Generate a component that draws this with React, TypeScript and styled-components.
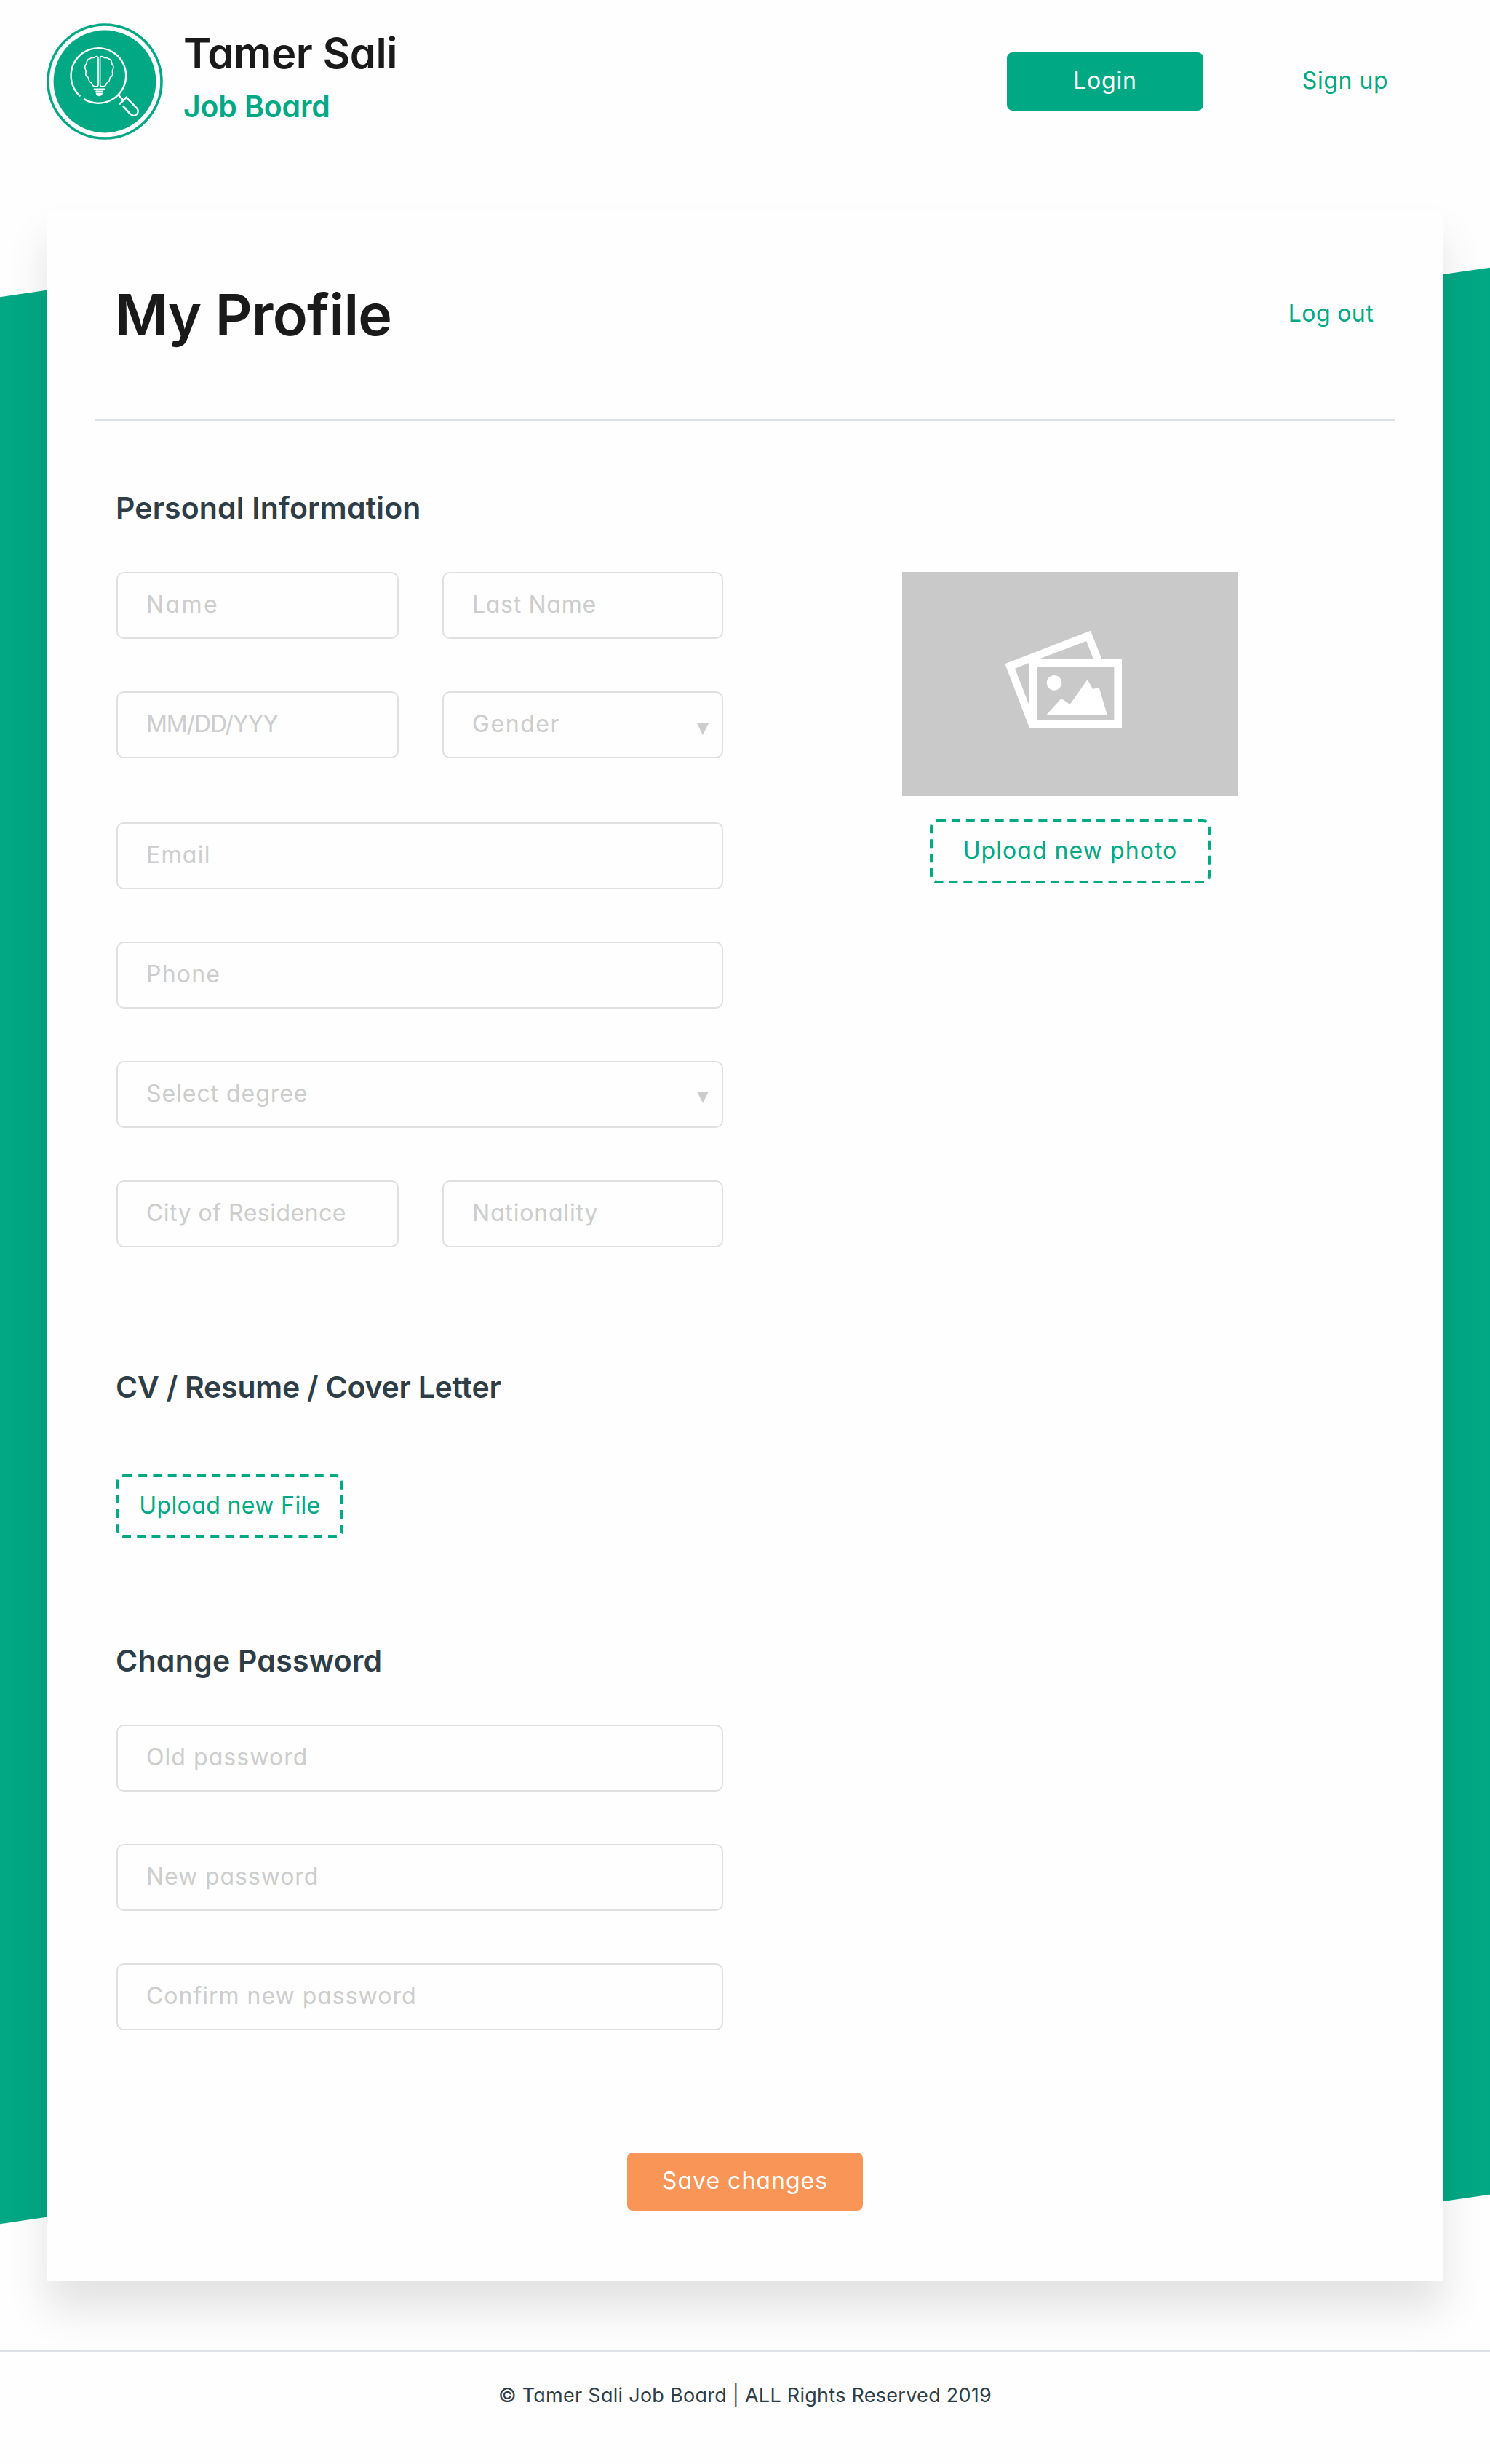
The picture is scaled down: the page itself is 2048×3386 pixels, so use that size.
import React from "react";
import styled, { createGlobalStyle } from "styled-components";

const color = {
  green: "#00a884",
  orange: "#f99657",
  ink: "#1a1a1a",
  slate: "#2f3e46",
  muted: "#cdcdcd",
  line: "#dee2e6",
  fieldBorder: "#e0e0e0",
};

const GlobalStyle = createGlobalStyle`
  *, *::before, *::after { box-sizing: border-box; }
  body {
    margin: 0;
    background: #fefefe;
    color: ${color.slate};
    font-family: Inter, "Liberation Sans", sans-serif;
    font-feature-settings: "cv11";
    font-size: 32px;
  }
`;

const Page = styled.div`
  position: relative;
  width: 2048px;
  min-height: 3386px;
  display: flex;
  flex-direction: column;
  overflow: hidden;
`;

const Backdrop = styled.div`
  position: absolute;
  top: 367px;
  left: 0;
  width: 100%;
  height: 2690px;
  background: ${color.green};
  clip-path: polygon(
    0 41.3px, 64px 31.7px, 1984px 10px, 2048px 0.7px,
    2048px 2648.7px, 1984px 2658px, 64px 2679.7px, 0 2689.3px
  );
`;

const Tracked = styled.span<{ $track: number }>`
  letter-spacing: ${(p) => p.$track}px;
  white-space: nowrap;
`;

const Header = styled.header`
  display: flex;
  align-items: center;
  justify-content: space-between;
  height: 224px;
  padding: 0 64px;
`;

const Brand = styled.a`
  display: flex;
  align-items: center;
  gap: 28px;
`;

const BrandText = styled.div`
  display: flex;
  flex-direction: column;
  gap: 13px;
  padding-bottom: 6px;
`;

const BrandName = styled.div`
  font-size: 58px;
  font-weight: 600;
  line-height: 60px;
  color: ${color.ink};
`;

const BrandTag = styled.div`
  font-size: 41px;
  font-weight: 600;
  line-height: 60px;
  color: ${color.green};
`;

const Nav = styled.nav`
  display: flex;
  gap: 60px;
`;

const Button = styled.button<{ $tone: "green" | "orange" | "plain"; $width: number }>`
  display: flex;
  align-items: center;
  justify-content: center;
  width: ${(p) => p.$width}px;
  height: 80px;
  padding: 0 0 3px;
  border: 0;
  border-radius: 8px;
  background: ${(p) => (p.$tone === "plain" ? "transparent" : color[p.$tone])};
  color: ${(p) => (p.$tone === "plain" ? color.green : "#fff")};
  font: inherit;
  font-feature-settings: inherit;
`;

const Card = styled.main`
  position: relative;
  display: flex;
  flex-direction: column;
  margin: 64px 64px 96px;
  padding-bottom: 96px;
  background: #fefefe;
  box-shadow: 0 40px 54px rgba(0, 0, 0, 0.11);
`;

const CardHead = styled.div`
  display: flex;
  align-items: center;
  justify-content: space-between;
  height: 290px;
  margin: 0 66px;
  padding: 0 30px 0 28px;
  border-bottom: 2px solid ${color.line};
`;

const Title = styled.h1`
  margin: 0;
  font-size: 79px;
  font-weight: 600;
  line-height: 120px;
  color: ${color.ink};
`;

const LogOut = styled.a`
  padding-bottom: 3px;
  color: ${color.green};
`;

const Body = styled.div`
  display: flex;
  flex-direction: column;
  padding: 90px 96px 0;
`;

const SectionTitle = styled.h2`
  margin: 0 0 58px -1px;
  font-size: 41px;
  font-weight: 600;
  line-height: 60px;
  color: ${color.slate};
`;

const Columns = styled.div`
  display: grid;
  grid-template-columns: 834px 462px;
  column-gap: 246px;
  align-items: start;
`;

const FieldStack = styled.div`
  display: flex;
  flex-direction: column;
  gap: 72px;
  width: 834px;
`;

const FieldPair = styled.div<{ $spaced?: boolean }>`
  display: grid;
  grid-template-columns: 388px 386px;
  gap: 60px;
  margin-bottom: ${(p) => (p.$spaced ? 16 : 0)}px;
`;

const FieldBox = styled.label`
  position: relative;
  display: flex;
  align-items: center;
  height: 92px;
  padding: 0 39px 3px;
  border: 2px solid ${color.fieldBorder};
  border-radius: 10px;
  color: ${color.muted};
`;

const Caret = styled.i<{ $top: number }>`
  position: absolute;
  right: 18px;
  top: ${(p) => p.$top}px;
  border: 8px solid transparent;
  border-top: 16px solid ${color.muted};
  border-bottom: 0;
`;

const PhotoColumn = styled.aside`
  display: flex;
  flex-direction: column;
  align-items: center;
  gap: 32px;
`;

const PhotoFrame = styled.div`
  width: 462px;
  height: 308px;
  background: #c9c9c9;

  svg { display: block; }
`;

const UploadButton = styled.button<{ $width: number }>`
  position: relative;
  display: flex;
  align-items: center;
  justify-content: center;
  width: ${(p) => p.$width}px;
  height: 88px;
  padding: 0 0 4px;
  border: 0;
  background: none;
  color: ${color.green};
  font: inherit;
  font-feature-settings: inherit;

  &::before {
    content: "";
    position: absolute;
    top: 0;
    left: 0;
    width: 50%;
    height: 50%;
    border: 2px dashed ${color.green};
    border-radius: 5px;
    transform: scale(2);
    transform-origin: 0 0;
  }
`;

const CvSection = styled.section`
  padding: 162px 0 138px;

  ${SectionTitle} { margin-bottom: 90px; }
`;

const Actions = styled.div`
  display: flex;
  justify-content: center;
  padding-top: 168px;
`;

const Footer = styled.footer`
  flex: 1;
  border-top: 2px solid ${color.line};
  padding-top: 40px;
  text-align: center;
  font-size: 27px;
  line-height: 40px;
`;

function Field({ label, track, caretTop }: { label: string; track: number; caretTop?: number }) {
  return (
    <FieldBox>
      <Tracked $track={track}>{label}</Tracked>
      {caretTop !== undefined && <Caret $top={caretTop} />}
    </FieldBox>
  );
}

const brainHalf =
  "M71 48.5 Q71 45.4 68.5 45.6 Q66.5 45.8 65.3 47.5 Q61.5 47 59.2 48.8 Q55.6 49.5 55.3 53.5 Q55.4 55.3 54.2 56.6 Q51.6 60 53.4 63.2 Q54.8 65 54 68 Q53 72.2 56.6 74 Q58 75 58 77.5 Q58.4 80.4 61 81.4 Q62.6 82.4 62.9 84.5 Q64 86.9 67 86.8 L69.2 86.8 Q71 86.6 71 84.6 Z";

function Logo() {
  return (
    <svg width="160" height="160" viewBox="0 0 160 160" fill="none">
      <circle cx="80" cy="80" r="78" stroke={color.green} strokeWidth="3.6" />
      <circle cx="80" cy="80" r="70.4" fill={color.green} />
      <g stroke="#fff" strokeWidth="2.4" strokeLinecap="round" strokeLinejoin="round">
        <path d="M45.6 99.6 A37.8 37.8 0 1 1 52 104.4" />
        <path d="M99.4 99.4 L104.8 104.8" />
        <path d="M100.8 110.6 L109.6 101.8" />
        <path d="M109.6 101.8 L124 116.6 C129.4 123.4 120.4 130.6 114.8 124.4 L105.6 114.4" />
      </g>
      <g stroke="#fff" strokeWidth="1.7" strokeLinejoin="round">
        <path d={brainHalf} />
        <path d={brainHalf} transform="translate(144.6 0) scale(-1 1)" />
      </g>
      <g stroke="#fff" strokeWidth="1.6" strokeLinecap="round">
        <path d="M65.4 90.4 H79.6" />
        <path d="M68 93.4 H77.2" />
      </g>
      <path d="M67.6 95.6 H77 Q76.6 100.2 72.3 100.2 Q68 100.2 67.6 95.6 Z" fill="#fff" />
    </svg>
  );
}

function PhotoPlaceholder() {
  return (
    <svg width="462" height="308" viewBox="0 0 462 308" fill="#fff">
      <path
        fillRule="evenodd"
        d="M141.3 126.3 L259 80.7 L274.2 119.3 H302 V214.3 H175 Z M155 132.7 L175 184 V124.7 Z M189 119.3 H262.7 L253.3 95 Z M185.7 130.3 V204 H291.3 V130.3 Z"
      />
      <circle cx="209" cy="152.3" r="10.4" />
      <path d="M198.7 196 L218.7 173.7 L230.7 182 L254.7 147.7 L262 161 L270.7 158.7 L281.7 196 Z" />
    </svg>
  );
}

export default function App() {
  return (
    <>
      <GlobalStyle />
      <Page>
        <Backdrop />
        <Header>
          <Brand>
            <Logo />
            <BrandText>
              <BrandName>
                <Tracked $track={-0.43}>Tamer Sali</Tracked>
              </BrandName>
              <BrandTag>
                <Tracked $track={-0.18}>Job Board</Tracked>
              </BrandTag>
            </BrandText>
          </Brand>
          <Nav>
            <Button $tone="green" $width={270}>
              <Tracked $track={0.82}>Login</Tracked>
            </Button>
            <Button $tone="plain" $width={270}>
              <Tracked $track={0.59}>Sign up</Tracked>
            </Button>
          </Nav>
        </Header>

        <Card>
          <CardHead>
            <Title>
              <Tracked $track={-0.75}>My Profile</Tracked>
            </Title>
            <LogOut>
              <Tracked $track={0.38}>Log out</Tracked>
            </LogOut>
          </CardHead>

          <Body>
            <SectionTitle>
              <Tracked $track={0.14}>Personal Information</Tracked>
            </SectionTitle>
            <Columns>
              <FieldStack>
                <FieldPair>
                  <Field label="Name" track={2.46} />
                  <Field label="Last Name" track={0.7} />
                </FieldPair>
                <FieldPair $spaced>
                  <Field label="MM/DD/YYY" track={-1.13} />
                  <Field label="Gender" track={1.57} caretTop={42} />
                </FieldPair>
                <Field label="Email" track={1.28} />
                <Field label="Phone" track={1.23} />
                <Field label="Select degree" track={0.95} caretTop={40} />
                <FieldPair>
                  <Field label="City of Residence" track={0.48} />
                  <Field label="Nationality" track={0.82} />
                </FieldPair>
              </FieldStack>
              <PhotoColumn>
                <PhotoFrame>
                  <PhotoPlaceholder />
                </PhotoFrame>
                <UploadButton $width={386}>
                  <Tracked $track={1.06}>Upload new photo</Tracked>
                </UploadButton>
              </PhotoColumn>
            </Columns>

            <CvSection>
              <SectionTitle>
                <Tracked $track={-0.23}>CV / Resume / Cover Letter</Tracked>
              </SectionTitle>
              <UploadButton $width={312}>
                <Tracked $track={0.37}>Upload new File</Tracked>
              </UploadButton>
            </CvSection>

            <SectionTitle>
              <Tracked $track={0.25}>Change Password</Tracked>
            </SectionTitle>
            <FieldStack>
              <Field label="Old password" track={1.06} />
              <Field label="New password" track={0.92} />
              <Field label="Confirm new password" track={0.99} />
            </FieldStack>

            <Actions>
              <Button $tone="orange" $width={324}>
                <Tracked $track={1.02}>Save changes</Tracked>
              </Button>
            </Actions>
          </Body>
        </Card>

        <Footer>
          <Tracked $track={0.27}>© Tamer Sali Job Board | ALL Rights Reserved 2019</Tracked>
        </Footer>
      </Page>
    </>
  );
}
